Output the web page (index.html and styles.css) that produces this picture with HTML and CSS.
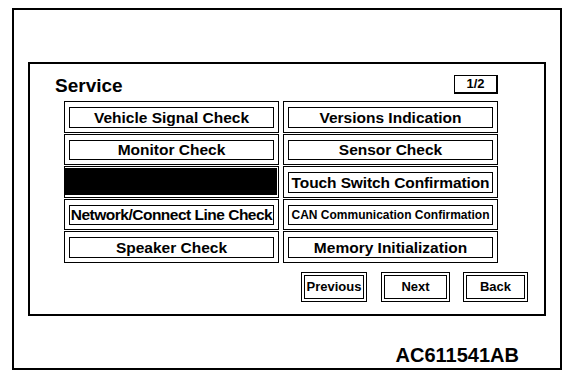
FILE: index.html
```html
<!DOCTYPE html>
<html lang="en">
<head>
    <meta charset="UTF-8">
    <meta name="viewport" content="width=device-width, initial-scale=1.0">
    <title>Service</title>
    <link rel="stylesheet" href="styles.css">
</head>
<body>
    <div class="screen">
        <div class="panel">
            <div class="panel-head">
                <h1 class="title">Service</h1>
                <span class="page-no">1/2</span>
            </div>

            <div class="menu">
                <div class="cell"><button class="item">Vehicle Signal Check</button></div>
                <div class="cell"><button class="item">Versions Indication</button></div>
                <div class="cell"><button class="item">Monitor Check</button></div>
                <div class="cell"><button class="item">Sensor Check</button></div>
                <div class="cell masked"><div class="blank"></div></div>
                <div class="cell"><button class="item snug">Touch Switch Confirmation</button></div>
                <div class="cell"><button class="item tight">Network/Connect Line Check</button></div>
                <div class="cell"><button class="item small">CAN Communication Confirmation</button></div>
                <div class="cell"><button class="item">Speaker Check</button></div>
                <div class="cell"><button class="item">Memory Initialization</button></div>
            </div>

            <div class="nav">
                <button class="nav-btn prev">Previous</button>
                <button class="nav-btn next">Next</button>
                <button class="nav-btn back">Back</button>
            </div>
        </div>

        <div class="figure-id">AC611541AB</div>
    </div>
</body>
</html>
```

FILE: styles.css
```css
body {
    margin: 0;
    background-color: #fff;
    color: #000;
    font-family: 'Liberation Sans', Arial, sans-serif;
}
button {
    font-family: inherit;
    color: #000;
    background-color: #fff;
    padding: 0;
    cursor: pointer;
}
.screen {
    box-sizing: border-box;
    width: 550px;
    height: 362px;
    margin: 8px 0 0 12px;
    padding: 52px 0 0 14px;
    border: 2px solid #000;
}
.panel {
    box-sizing: border-box;
    width: 518px;
    padding: 11px 0 12px 25px;
    border: 2px solid #000;
}
.panel-head {
    display: flex;
    justify-content: space-between;
    align-items: flex-start;
    width: 443px;
    height: 18px;
}
.title {
    margin: 1px 0 0;
    font-size: 19px;
    line-height: 19px;
    font-weight: bold;
}
.page-no {
    box-sizing: border-box;
    width: 44px;
    height: 19px;
    border: 1px solid #000;
    border-right-width: 2px;
    border-bottom-width: 2px;
    font-size: 13px;
    font-weight: bold;
    line-height: 16px;
    text-align: center;
}
.menu {
    display: grid;
    grid-template-columns: 215px 215px;
    grid-template-rows: repeat(5, 31.6px);
    column-gap: 4px;
    row-gap: 1px;
    margin: 8px 0 0 9px;
}
.cell {
    box-sizing: border-box;
    display: flex;
    padding: 5px 4px 4px;
    border: 1px solid #000;
}
.cell.masked {
    padding: 1px 1px 2px 0;
}
.blank {
    flex: 1;
    margin-left: -1px;
    background-color: #000;
}
.item {
    flex: 1;
    border: 1px solid #000;
    font-size: 15.5px;
    font-weight: bold;
    line-height: 1;
    white-space: nowrap;
}
.item.snug {
    letter-spacing: -0.1px;
}
.item.tight {
    letter-spacing: -0.5px;
}
.item.small {
    font-size: 12px;
}
.nav {
    display: flex;
    margin: 9px 0 0 246px;
}
.nav-btn {
    height: 30px;
    border: 1px solid #000;
    box-shadow: inset 0 0 0 2px #fff, inset 0 0 0 3px #000;
    font-size: 13px;
    font-weight: bold;
}
.prev {
    width: 66px;
    margin-right: 14px;
}
.next {
    width: 69px;
    margin-right: 13px;
}
.back {
    width: 65px;
}
.figure-id {
    margin-top: 29px;
    padding-right: 41px;
    font-size: 20px;
    line-height: 20px;
    font-weight: bold;
    text-align: right;
}
```
